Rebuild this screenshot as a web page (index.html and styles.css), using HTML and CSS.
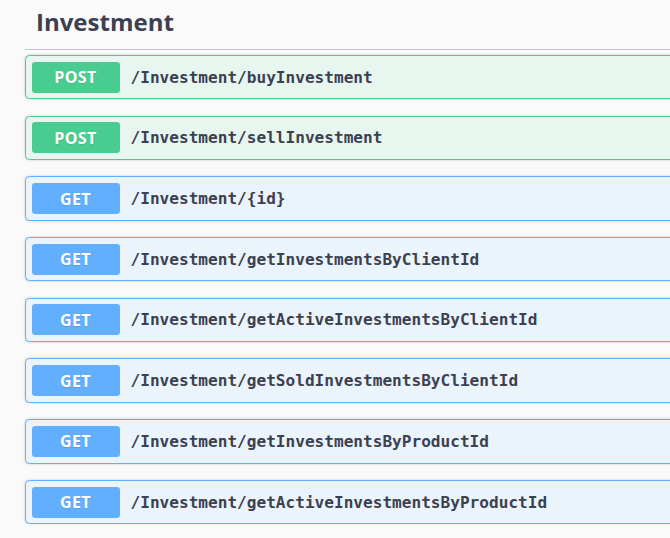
FILE: index.html
```html
<!DOCTYPE html>
<html>
<head>
<meta charset="utf-8">
<link rel="stylesheet" href="styles.css">
</head>
<body>
<div class="section">
  <h3 class="tag">Investment</h3>
  <div class="ops">
    <div class="op post"><span class="method">POST</span><span class="path">/Investment/buyInvestment</span></div>
    <div class="op post"><span class="method">POST</span><span class="path">/Investment/sellInvestment</span></div>
    <div class="op get"><span class="method">GET</span><span class="path">/Investment/{id}</span></div>
    <div class="op get"><span class="method">GET</span><span class="path">/Investment/getInvestmentsByClientId</span></div>
    <div class="op get"><span class="method">GET</span><span class="path">/Investment/getActiveInvestmentsByClientId</span></div>
    <div class="op get"><span class="method">GET</span><span class="path">/Investment/getSoldInvestmentsByClientId</span></div>
    <div class="op get"><span class="method">GET</span><span class="path">/Investment/getInvestmentsByProductId</span></div>
    <div class="op get"><span class="method">GET</span><span class="path">/Investment/getActiveInvestmentsByProductId</span></div>
  </div>
</div>
</body>
</html>
```

FILE: styles.css
```css
html, body {
  margin: 0;
  padding: 0;
  background: #fafafa;
  overflow: hidden;
}
body {
  font-family: "Open Sans", "Noto Sans", sans-serif;
  color: #3b4151;
}
.section {
  padding-left: 25px;
  width: 700px;
}
.tag {
  margin: 0 0 5px 0;
  padding: 8px 22px 14px 11px;
  font-size: 24px;
  line-height: 27px;
  font-weight: 700;
  color: #3b4151;
  border-bottom: 1px solid #c6c7cb;
}
.ops {
  display: flex;
  flex-direction: column;
  gap: 16.3px;
}
.op {
  display: flex;
  align-items: center;
  height: 42.4px;
  padding: 0 5.5px;
  border: 1px solid;
  border-radius: 4.4px;
  box-shadow: 0 0 3px rgba(0,0,0,.19);
}
.op.post {
  background: #e8f6f0;
  border-color: #49cc90;
}
.op.get {
  background: #ebf3fb;
  border-color: #61affe;
}
.method {
  width: 88px;
  height: 31px;
  display: flex;
  align-items: center;
  justify-content: center;
  border-radius: 3.3px;
  color: #fff;
  font-size: 16px;
  letter-spacing: 0.4px;
  font-weight: 700;
  text-shadow: 0 1px 0 rgba(0,0,0,.1);
}
.post .method { background: #49cc90; }
.get .method { background: #61affe; }
.path {
  padding: 0 11px;
  font-family: "DejaVu Sans Mono", "Liberation Mono", monospace;
  font-size: 16.1px;
  font-weight: 700;
  color: #3b4151;
}
```
